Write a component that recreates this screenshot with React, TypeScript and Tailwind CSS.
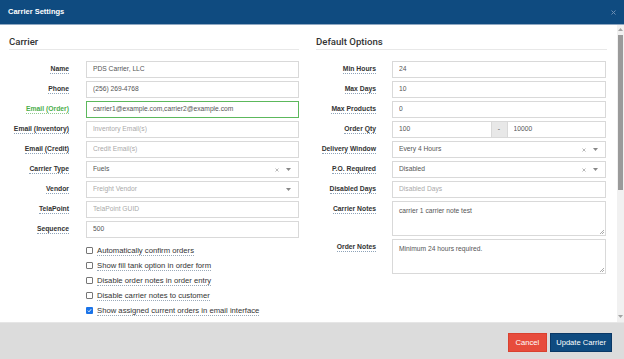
import React from 'react';

const font = { fontFamily: '"Liberation Sans", Arial, sans-serif' };

function Label({ text, green }: { text: string; green?: boolean }) {
  return (
    <span
      className={`border-b border-dotted leading-[8px] font-bold text-[6.8px] ${
        green ? 'text-[#4cae4c] border-[#8fca8f]' : 'text-[#333] border-[#8ea3b8]'
      }`}
    >
      {text}
    </span>
  );
}

function Row({
  label,
  labelW,
  green,
  children,
}: {
  label: string;
  labelW: string;
  green?: boolean;
  children: React.ReactNode;
}) {
  return (
    <div className="flex items-start">
      <div className={`${labelW} h-[17px] flex items-center justify-end shrink-0`}>
        <Label text={label} green={green} />
      </div>
      <div className="flex-1 min-w-0">{children}</div>
    </div>
  );
}

function Box({
  value,
  placeholder,
  green,
  clear,
  caret,
}: {
  value?: string;
  placeholder?: string;
  green?: boolean;
  clear?: boolean;
  caret?: boolean;
}) {
  return (
    <div
      className={`h-[17px] flex items-center pl-[6px] pr-[6px] bg-white border text-[6.7px] ${
        green ? 'border-[#5cb85c]' : 'border-[#d9d9d9]'
      }`}
    >
      <span className={`flex-1 truncate ${value ? 'text-[#555]' : 'text-[#aaa]'}`}>
        {value ?? placeholder}
      </span>
      {clear && (
        <svg width="4" height="4" viewBox="0 0 4 4" className="mr-[7px]">
          <path d="M0.5 0.5L3.5 3.5M3.5 0.5L0.5 3.5" stroke="#999" strokeWidth="0.7" />
        </svg>
      )}
      {caret && (
        <svg width="5" height="3" viewBox="0 0 5 3" className="mr-[1px]">
          <path d="M0 0h5L2.5 3z" fill="#888" />
        </svg>
      )}
    </div>
  );
}

function Area({ value }: { value: string }) {
  return (
    <div className="h-[35px] relative bg-white border border-[#d9d9d9] px-[6px] pt-[4px] text-[6.7px] text-[#555]">
      {value}
      <svg width="5" height="5" viewBox="0 0 5 5" className="absolute right-[1px] bottom-[1px]">
        <path d="M5 1L1 5M5 3L3 5" stroke="#888" strokeWidth="0.7" />
      </svg>
    </div>
  );
}

function Check({ text, checked }: { text: string; checked?: boolean }) {
  return (
    <div className="h-[15px] flex items-center">
      {checked ? (
        <div className="w-[7px] h-[7px] rounded-[1px] bg-[#1a73e8] flex items-center justify-center">
          <svg width="5" height="5" viewBox="0 0 5 5">
            <path d="M0.8 2.6L2 3.8L4.2 1.2" stroke="white" strokeWidth="0.9" fill="none" />
          </svg>
        </div>
      ) : (
        <div className="w-[7px] h-[7px] rounded-[1px] border border-[#767676] bg-white" />
      )}
      <span className="ml-[4px] text-[7.7px] text-[#333] leading-[9px] border-b border-dotted border-[#9aa9b8]">
        {text}
      </span>
    </div>
  );
}

function Heading({ text }: { text: string }) {
  return (
    <div
      className="pt-[11px] pb-[2px] border-b border-[#e8e8e8] text-[9.6px] font-medium text-[#333] leading-[11px]"
      style={{ fontFamily: 'Roboto, "Liberation Sans", sans-serif' }}
    >
      {text}
    </div>
  );
}

export default function App() {
  const L = 'w-[77px] pr-[17px]';
  const R = 'w-[76px] pr-[16px]';
  return (
    <div className="w-[624px] h-[359px] flex flex-col overflow-hidden bg-white" style={font}>
      <div className="h-[25px] shrink-0 bg-[#0f4b80] border-b border-[#8fa8c2] flex items-center justify-between pl-[8px] pr-[8px]">
        <span className="text-white font-bold text-[7.5px]">Carrier Settings</span>
        <svg width="5" height="5" viewBox="0 0 5 5">
          <path d="M0.5 0.5L4.5 4.5M4.5 0.5L0.5 4.5" stroke="#6f8fb3" strokeWidth="1" />
        </svg>
      </div>

      <div className="flex-1 flex min-h-0">
        <div className="flex-1 pl-[9px] grid grid-cols-[290px_291px] gap-x-[17px] content-start">
          <div>
            <Heading text="Carrier" />
            <div className="mt-[11px] flex flex-col gap-[3px]">
              <Row label="Name" labelW={L}>
                <Box value="PDS Carrier, LLC" />
              </Row>
              <Row label="Phone" labelW={L}>
                <Box value="(256) 269-4768" />
              </Row>
              <Row label="Email (Order)" labelW={L} green>
                <Box value="carrier1@example.com,carrier2@example.com" green />
              </Row>
              <Row label="Email (Inventory)" labelW={L}>
                <Box placeholder="Inventory Email(s)" />
              </Row>
              <Row label="Email (Credit)" labelW={L}>
                <Box placeholder="Credit Email(s)" />
              </Row>
              <Row label="Carrier Type" labelW={L}>
                <Box value="Fuels" clear caret />
              </Row>
              <Row label="Vendor" labelW={L}>
                <Box placeholder="Freight Vendor" caret />
              </Row>
              <Row label="TelaPoint" labelW={L}>
                <Box placeholder="TelaPoint GUID" />
              </Row>
              <Row label="Sequence" labelW={L}>
                <Box value="500" />
              </Row>
            </div>
            <div className="mt-[5px] pl-[77px] flex flex-col">
              <Check text="Automatically confirm orders" />
              <Check text="Show fill tank option in order form" />
              <Check text="Disable order notes in order entry" />
              <Check text="Disable carrier notes to customer" />
              <Check text="Show assigned current orders in email interface" checked />
            </div>
          </div>

          <div>
            <Heading text="Default Options" />
            <div className="mt-[11px] flex flex-col gap-[3px] pr-[1px]">
              <Row label="Min Hours" labelW={R}>
                <Box value="24" />
              </Row>
              <Row label="Max Days" labelW={R}>
                <Box value="10" />
              </Row>
              <Row label="Max Products" labelW={R}>
                <Box value="0" />
              </Row>
              <Row label="Order Qty" labelW={R}>
                <div className="flex">
                  <div className="flex-1">
                    <Box value="100" />
                  </div>
                  <div className="w-[15px] h-[17px] bg-[#e8e8e8] border-y border-[#d9d9d9] flex items-center justify-center text-[7px] text-[#555]">
                    -
                  </div>
                  <div className="flex-1">
                    <Box value="10000" />
                  </div>
                </div>
              </Row>
              <Row label="Delivery Window" labelW={R}>
                <Box value="Every 4 Hours" clear caret />
              </Row>
              <Row label="P.O. Required" labelW={R}>
                <Box value="Disabled" clear caret />
              </Row>
              <Row label="Disabled Days" labelW={R}>
                <Box placeholder="Disabled Days" />
              </Row>
              <Row label="Carrier Notes" labelW={R}>
                <Area value="carrier 1 carrier note test" />
              </Row>
              <Row label="Order Notes" labelW={R}>
                <Area value="Minimum 24 hours required." />
              </Row>
            </div>
          </div>
        </div>

        <div className="w-[7px] shrink-0 bg-[#f1f1f1] flex flex-col items-center">
          <svg width="5" height="3" viewBox="0 0 5 3" className="mt-[3px]">
            <path d="M0 3h5L2.5 0z" fill="#a3a3a3" />
          </svg>
          <div className="mt-[4px] w-[5px] h-[155px] bg-[#9a9a9a]" />
          <div className="flex-1" />
          <svg width="5" height="3" viewBox="0 0 5 3" className="mb-[4px]">
            <path d="M0 0h5L2.5 3z" fill="#a3a3a3" />
          </svg>
        </div>
      </div>

      <div className="h-[37px] shrink-0 bg-[#dcdcdc] border-t border-[#e6e6e6] flex items-start justify-end pt-[10px] pr-[12px] gap-[3px]">
        <div className="h-[19px] px-[7px] flex items-center bg-[#e74c3c] border border-[#d9412f] text-white text-[7.6px]">
          Cancel
        </div>
        <div className="h-[19px] px-[5px] flex items-center bg-[#0f4b80] border border-[#0a3866] text-white text-[7.6px]">
          Update Carrier
        </div>
      </div>
    </div>
  );
}
